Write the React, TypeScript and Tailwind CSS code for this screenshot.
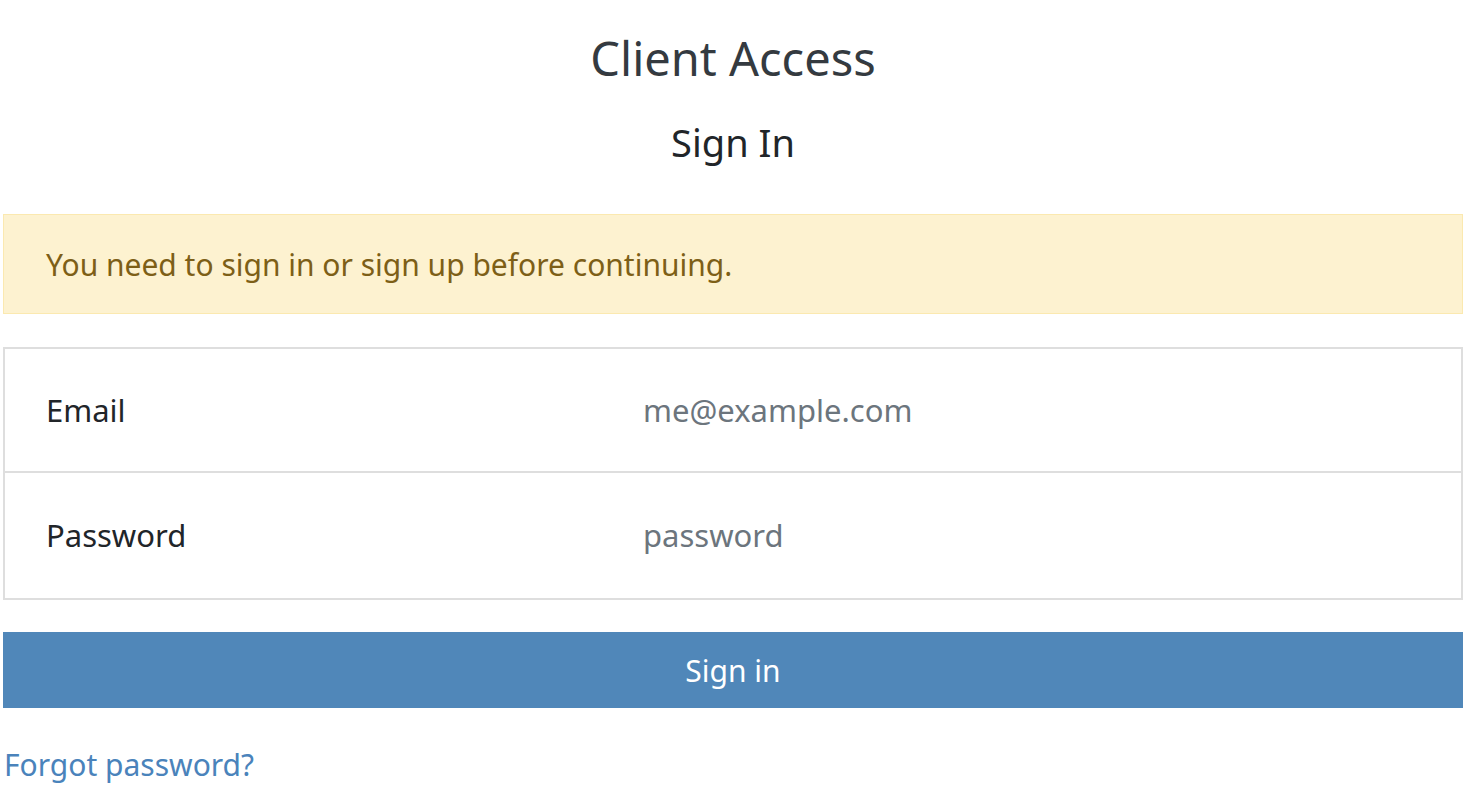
import React from 'react';

const App = () => {
  return (
    <div className="min-h-[792px] bg-white" style={{ fontFamily: '"Noto Sans", "Open Sans", sans-serif' }}>
      <div className="w-[1460px] ml-[3px]">
        <h1 className="pt-[26px] text-center text-[47px] leading-[64px] text-[#343a40]">Client Access</h1>
        <h2 className="mt-[24px] text-center text-[38px] leading-[56px] text-[#212529]">Sign In</h2>

        {/* Flash message */}
        <div className="mt-[44px] h-[100px] flex items-center px-[42px] bg-[#fdf2d0] border border-[#fbe9b0] text-[30px] text-[#7d5f17]">
          You need to sign in or sign up before continuing.
        </div>

        {/* Form */}
        <form className="mt-[33px]">
          <div className="border-2 border-[#dedede]">
            <div className="flex items-center h-[124px] border-b-2 border-[#dedede]">
              <label className="w-[638px] pl-[41px] text-[31px] text-[#212529]">Email</label>
              <input
                type="email"
                placeholder="me@example.com"
                className="flex-1 text-[31px] text-[#212529] placeholder:text-[#6c757d] outline-none"
              />
            </div>
            <div className="flex items-center h-[125px]">
              <label className="w-[638px] pl-[41px] text-[31px] text-[#212529]">Password</label>
              <input
                type="password"
                placeholder="password"
                className="flex-1 text-[31px] text-[#212529] placeholder:text-[#6c757d] outline-none"
              />
            </div>
          </div>

          <button type="button" className="mt-[32px] w-full h-[76px] bg-[#5087b9] text-white text-[30px]">
            Sign in
          </button>
        </form>

        <a href="#" className="block mt-[37px] ml-[1px] text-[30px] leading-[40px] text-[#4a83bb]">
          Forgot password?
        </a>
      </div>
    </div>
  );
};

export default App;
